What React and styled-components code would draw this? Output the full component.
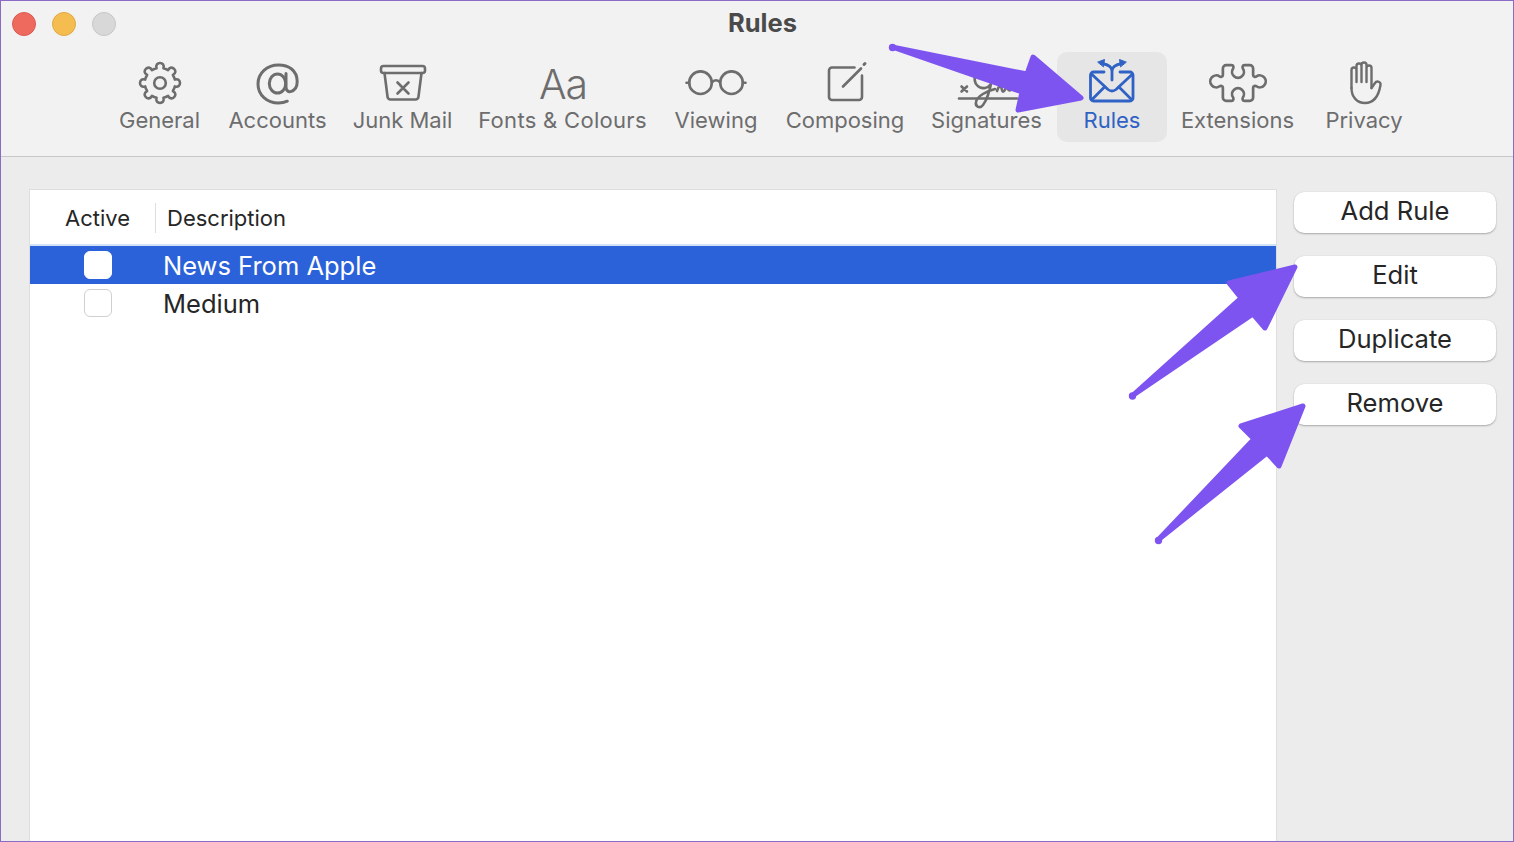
import React from 'react';
import styled, { createGlobalStyle } from 'styled-components';

const Global = createGlobalStyle`
  html, body { margin: 0; padding: 0; background: #ececec; }
  * { box-sizing: border-box; }
`;

const Windowed = styled.div`
  position: relative;
  width: 1514px;
  height: 842px;
  overflow: hidden;
  border: 1px solid #8a6cc8;
  background: #ececec;
  font-family: Inter, "Liberation Sans", sans-serif;
  display: flex;
  flex-direction: column;
`;
const Header = styled.header`
  height: 156px;
  flex: none;
  background: #f2f2f3;
  border-bottom: 1px solid #c8c8c8;
`;
const TitleBar = styled.div`
  height: 45px;
  padding-left: 11px;
  display: grid;
  grid-template-columns: 1fr auto 1fr;
  align-items: center;
`;
const Lights = styled.div`
  display: flex;
  gap: 16px;
  margin-top: 1px;
`;
const Light = styled.span`
  width: 24px;
  height: 24px;
  border-radius: 50%;
  background: ${p => p.$c};
  border: 1px solid ${p => p.$b};
`;
const Title = styled.h1`
  margin: 0 0 2px;
  font-size: 25.5px;
  font-weight: 700;
  line-height: 43px;
  color: #4a4a4a;
`;
const Toolbar = styled.nav`
  display: flex;
  margin-top: 6px;
  padding-left: 104px;
`;
const Tab = styled.div`
  width: ${p => p.$w}px;
  margin-right: ${p => p.$mr || 0}px;
  height: 90px;
  padding-top: 6px;
  display: flex;
  flex-direction: column;
  align-items: center;
  border-radius: 10px;
  background: ${p => (p.$active ? '#e6e6e6' : 'transparent')};
  color: ${p => (p.$active ? '#2f62c4' : '#6d6d6d')};
`;
const IconSlot = styled.div`
  width: 60px;
  height: 48px;
  display: flex;
  align-items: center;
  justify-content: center;
  svg { display: block; overflow: visible; }
`;
const Label = styled.span`
  font-size: 22px;
  line-height: 28px;
  white-space: nowrap;
  letter-spacing: ${p => p.$ls || 0}px;
`;
const AaGlyph = styled.span`
  font-size: 41px;
  font-weight: 300;
  letter-spacing: -1px;
  line-height: 48px;
  padding: 3px 0 0 1px;
  color: #6d6d6d;
`;
const Main = styled.main`
  flex: 1;
  min-height: 0;
  display: flex;
  padding: 32px 17px 0 28px;
`;
const Panel = styled.section`
  flex: 1;
  background: #fff;
  border: 1px solid #dedede;
  border-bottom: 0;
`;
const TableHead = styled.div`
  height: 56px;
  padding-top: 1px;
  display: flex;
  align-items: center;
  border-bottom: 2px solid #d3e2f6;
`;
const HeadCell = styled.div`
  width: ${p => p.$w}px;
  height: 30px;
  padding-left: ${p => p.$pl}px;
  font-size: 22px;
  line-height: 30px;
  color: #262626;
  border-right: ${p => (p.$divider ? '1px solid #dedede' : '0')};
`;
const Row = styled.div`
  height: 38px;
  display: flex;
  align-items: center;
  background: ${p => (p.$selected ? '#2b62d9' : 'transparent')};
  color: ${p => (p.$selected ? '#fff' : '#262626')};
`;
const Check = styled.span`
  width: 28px;
  height: 28px;
  margin-left: 54px;
  border-radius: 6px;
  background: #fff;
  border: 1px solid ${p => (p.$selected ? '#fff' : '#d0d0d0')};
`;
const RowText = styled.span`
  margin-left: 51px;
  padding-top: 2px;
  font-size: 25.5px;
  line-height: 36px;
`;
const Side = styled.aside`
  width: 202px;
  margin-left: 17px;
  padding-top: 3px;
  display: flex;
  flex-direction: column;
  gap: 23px;
`;
const Btn = styled.button`
  height: 41px;
  padding: 0 0 4px;
  border: 0;
  border-radius: 10px;
  background: #fff;
  box-shadow: 0 1px 2px rgba(0,0,0,.28), 0 0 1px rgba(0,0,0,.12);
  font: 400 25.6px/36px Inter, "Liberation Sans", sans-serif;
  color: #262626;
`;
const Overlay = styled.svg`
  position: absolute;
  left: -1px;
  top: -1px;
  width: 1514px;
  height: 842px;
  pointer-events: none;
`;

const Ico = ({ children, sw = 2.6 }) => (
  <svg width="60" height="48" viewBox="0 0 60 48" fill="none" stroke="currentColor" strokeWidth={sw} strokeLinecap="round" strokeLinejoin="round">
    {children}
  </svg>
);

const gearPath = (() => {
  const cx = 30, cy = 25, ri = 15.2, ro = 22.5;
  const pt = (r, deg) => {
    const t = (deg * Math.PI) / 180;
    return `${(cx + r * Math.cos(t)).toFixed(2)} ${(cy + r * Math.sin(t)).toFixed(2)}`;
  };
  let d = '';
  for (let i = 0; i < 8; i++) {
    const a = -90 + i * 45;
    d += `${i === 0 ? 'M' : 'L'}${pt(ri, a - 13)} C${pt(ro, a - 15)} ${pt(ro, a + 15)} ${pt(ri, a + 13)} `;
    d += `A${ri} ${ri} 0 0 1 ${pt(ri, a + 32)} `;
  }
  return d + 'Z';
})();

const Gear = () => (
  <Ico><path d={gearPath} /><circle cx="30" cy="25" r="5.8" /></Ico>
);
const At = () => (
  <Ico sw={3}>
    <ellipse cx="29.5" cy="25.5" rx="8.2" ry="9.6" />
    <path d="M38 15.5V29c0 3 2 5.2 4.6 4.6c4.4-1 6.600-5 6.600-10C49.200 12 40.500 7 30.500 7C19 7 10 15 10 26c0 11 9 19 20.500 19c3.400 0 6.200-.6 8.800-1.800" />
  </Ico>
);
const Junk = () => (
  <Ico>
    <rect x="8" y="8" width="44" height="7" rx="2.5" />
    <path d="M11.500 15L14.500 38.500a3 3 0 0 0 3 3H42.500a3 3 0 0 0 3-3L48.500 15" />
    <path d="M24.500 24.500L35.500 35.500M35.500 24.500L24.500 35.500" />
  </Ico>
);
const Glasses = () => (
  <Ico>
    <circle cx="14.500" cy="24.700" r="11.300" />
    <circle cx="45.500" cy="24.700" r="11.300" />
    <path d="M25.800 24.500C28 21.500 32 21.500 34.200 24.500M3.200 24.700H0.500M56.800 24.700H59.500" />
  </Ico>
);
const Compose = () => (
  <Ico>
    <path d="M39.500 9.500H17a3 3 0 0 0-3 3V39a3 3 0 0 0 3 3H44a3 3 0 0 0 3-3V17.500" />
    <path d="M28 28.500L46 10.500" />
    <path d="M49 6.500L50 5.500" strokeWidth="3" />
  </Ico>
);
const Signature = () => (
  <Ico>
    <path d="M2 40.500H60" />
    <path d="M4.500 28.500L10 33.500M10 28.500L4.500 33.500" />
    <path d="M18 17C16 26 22 31 28 30C33 29 36 24 35 21C33 32 30 42 26 47C23 51 18 49 19 44C20 38 30 33 38 31" />
    <path d="M40 33C42 27 44 27 45 32C46 36 48 32 50 28C51 33 53 34 56 30" />
  </Ico>
);
const RulesIco = () => (
  <Ico sw={2.8}>
    <path d="M22 14H11.500a3 3 0 0 0-3 3V40a3 3 0 0 0 3 3H48a3 3 0 0 0 3-3V17a3 3 0 0 0-3-3H38" />
    <path d="M10 16.500L26 31.500Q30 34.500 34 31.500L50 16.500" />
    <path d="M10 41.500L22.500 29M49.500 41.500L37 29" />
    <path d="M30 22V13C30 9 26 6.500 20 5.500M30 13C30 9 34 6.500 40 5.500" />
    <path d="M16 4L22.500 1.500L21.500 8.500ZM44 4L37.500 1.500L38.500 8.500Z" fill="currentColor" strokeWidth="1" />
  </Ico>
);
const Puzzle = () => (
  <Ico sw={2.5}>
    <path transform="translate(30 25) scale(1.08) translate(-30 -24.500)" d="M19 8H24c2 0 2 2 1.500 3a5.500 5.500 0 1 0 9 0c-.5-1-.5-3 1.500-3H41a3 3 0 0 1 3 3V17c0 2 2 2 3 1.500a5.500 5.500 0 1 1 0 9c-1-.5-3-.5-3 1.500V38a3 3 0 0 1-3 3H36c-2 0-2-2-1.500-3a5.500 5.500 0 1 0-9 0c.5 1 .5 3-1.500 3H19a3 3 0 0 1-3-3V29c0-2-2-2-3-1.500a5.500 5.500 0 1 1 0-9c1 .5 3 .5 3-1.500V11a3 3 0 0 1 3-3Z" />
  </Ico>
);
const HandIco = () => (
  <Ico sw={2.4}>
    <path d="M17.500 30V12a2.500 2.500 0 0 1 5 0V24M22.500 24V8a2.500 2.500 0 0 1 5 0V24M27.500 24V7a2.500 2.500 0 0 1 5 0V24M32.500 24V10a2.500 2.500 0 0 1 5 0V30" />
    <path d="M37.500 30L41 25C43 22 47 24 46.500 27C45.500 33 43 45 31 45C23 45 17.500 39 17.500 30" />
  </Ico>
);

const tabs = [
  { label: 'General', w: 109, icon: <Gear /> },
  { label: 'Accounts', w: 127, icon: <At /> },
  { label: 'Junk Mail', w: 123, icon: <Junk /> },
  { label: 'Fonts & Colours', w: 197, ls: 0.3, icon: <AaGlyph>Aa</AaGlyph> },
  { label: 'Viewing', w: 110, icon: <Glasses /> },
  { label: 'Composing', w: 148, icon: <Compose /> },
  { label: 'Signatures', w: 135, mr: 3, icon: <Signature /> },
  { label: 'Rules', w: 110, active: true, icon: <RulesIco /> },
  { label: 'Extensions', w: 141, icon: <Puzzle /> },
  { label: 'Privacy', w: 112, icon: <HandIco /> },
];

const rules = [
  { name: 'News From Apple', selected: true },
  { name: 'Medium', selected: false },
];

export default function App() {
  return (
    <Windowed>
      <Global />
      <Header>
        <TitleBar>
          <Lights>
            <Light $c="#ee6a5f" $b="#dc5a50" />
            <Light $c="#f5bd4f" $b="#e0a93f" />
            <Light $c="#d8d8d8" $b="#c6c6c6" />
          </Lights>
          <Title>Rules</Title>
        </TitleBar>
        <Toolbar>
          {tabs.map(t => (
            <Tab key={t.label} $w={t.w} $mr={t.mr} $active={t.active}>
              <IconSlot>{t.icon}</IconSlot>
              <Label $ls={t.ls}>{t.label}</Label>
            </Tab>
          ))}
        </Toolbar>
      </Header>
      <Main>
        <Panel>
          <TableHead>
            <HeadCell $w={126} $pl={35} $divider>Active</HeadCell>
            <HeadCell $w={200} $pl={11}>Description</HeadCell>
          </TableHead>
          {rules.map(r => (
            <Row key={r.name} $selected={r.selected}>
              <Check $selected={r.selected} />
              <RowText>{r.name}</RowText>
            </Row>
          ))}
        </Panel>
        <Side>
          <Btn>Add Rule</Btn>
          <Btn>Edit</Btn>
          <Btn>Duplicate</Btn>
          <Btn>Remove</Btn>
        </Side>
      </Main>
      <Overlay viewBox="0 0 1514 842" fill="#7e54f0" stroke="#7e54f0" strokeWidth="5" strokeLinejoin="round">
        <polygon points="892,47 1027,74 1033,57 1081,98 1018,110 1022,92" />
        <circle cx="892.500" cy="47.500" r="1.200" />
        <polygon points="1132,396 1241,298 1229,283 1295,267 1265,328 1253,314" />
        <circle cx="1132.500" cy="396" r="1.200" />
        <polygon points="1158,540 1254,439 1241,426 1303,406 1279,466 1267,453" />
        <circle cx="1158.500" cy="540.500" r="1.200" />
      </Overlay>
    </Windowed>
  );
}
